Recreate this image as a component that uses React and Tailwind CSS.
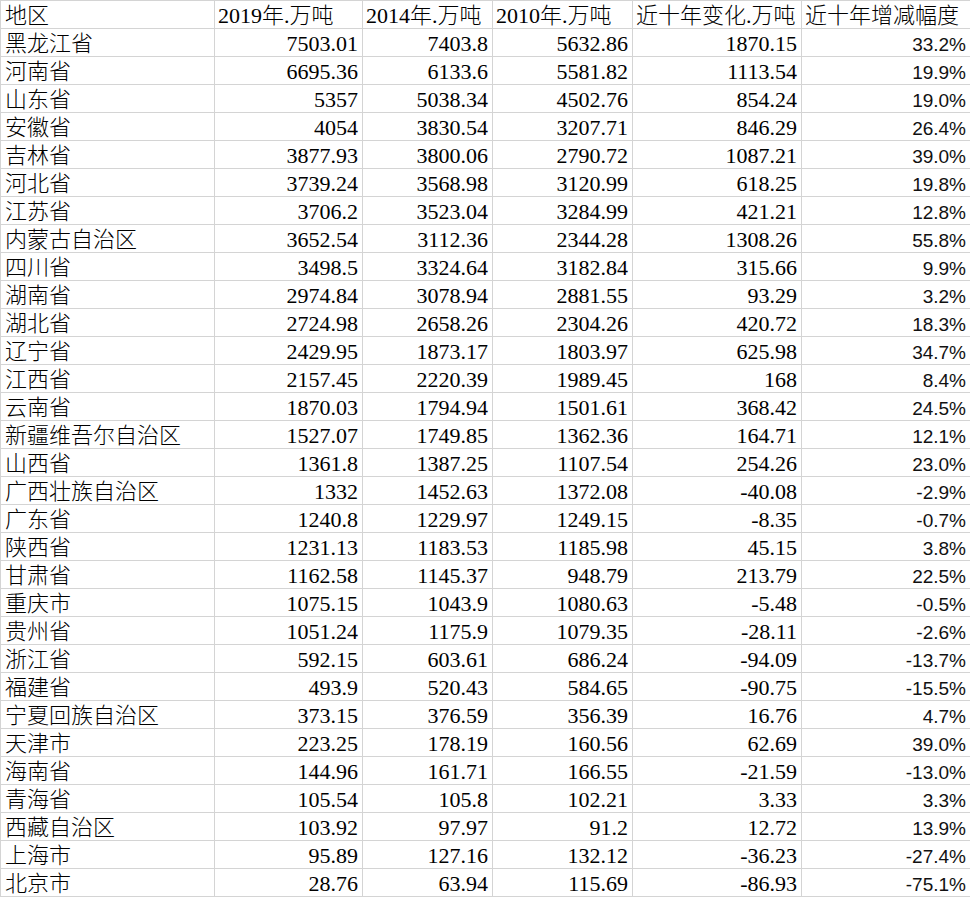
import { useState } from 'react';

const header = ['地区', '2019年.万吨', '2014年.万吨', '2010年.万吨', '近十年变化.万吨', '近十年增减幅度'];

const rows = [
  ['黑龙江省', '7503.01', '7403.8', '5632.86', '1870.15', '33.2%'],
  ['河南省', '6695.36', '6133.6', '5581.82', '1113.54', '19.9%'],
  ['山东省', '5357', '5038.34', '4502.76', '854.24', '19.0%'],
  ['安徽省', '4054', '3830.54', '3207.71', '846.29', '26.4%'],
  ['吉林省', '3877.93', '3800.06', '2790.72', '1087.21', '39.0%'],
  ['河北省', '3739.24', '3568.98', '3120.99', '618.25', '19.8%'],
  ['江苏省', '3706.2', '3523.04', '3284.99', '421.21', '12.8%'],
  ['内蒙古自治区', '3652.54', '3112.36', '2344.28', '1308.26', '55.8%'],
  ['四川省', '3498.5', '3324.64', '3182.84', '315.66', '9.9%'],
  ['湖南省', '2974.84', '3078.94', '2881.55', '93.29', '3.2%'],
  ['湖北省', '2724.98', '2658.26', '2304.26', '420.72', '18.3%'],
  ['辽宁省', '2429.95', '1873.17', '1803.97', '625.98', '34.7%'],
  ['江西省', '2157.45', '2220.39', '1989.45', '168', '8.4%'],
  ['云南省', '1870.03', '1794.94', '1501.61', '368.42', '24.5%'],
  ['新疆维吾尔自治区', '1527.07', '1749.85', '1362.36', '164.71', '12.1%'],
  ['山西省', '1361.8', '1387.25', '1107.54', '254.26', '23.0%'],
  ['广西壮族自治区', '1332', '1452.63', '1372.08', '-40.08', '-2.9%'],
  ['广东省', '1240.8', '1229.97', '1249.15', '-8.35', '-0.7%'],
  ['陕西省', '1231.13', '1183.53', '1185.98', '45.15', '3.8%'],
  ['甘肃省', '1162.58', '1145.37', '948.79', '213.79', '22.5%'],
  ['重庆市', '1075.15', '1043.9', '1080.63', '-5.48', '-0.5%'],
  ['贵州省', '1051.24', '1175.9', '1079.35', '-28.11', '-2.6%'],
  ['浙江省', '592.15', '603.61', '686.24', '-94.09', '-13.7%'],
  ['福建省', '493.9', '520.43', '584.65', '-90.75', '-15.5%'],
  ['宁夏回族自治区', '373.15', '376.59', '356.39', '16.76', '4.7%'],
  ['天津市', '223.25', '178.19', '160.56', '62.69', '39.0%'],
  ['海南省', '144.96', '161.71', '166.55', '-21.59', '-13.0%'],
  ['青海省', '105.54', '105.8', '102.21', '3.33', '3.3%'],
  ['西藏自治区', '103.92', '97.97', '91.2', '12.72', '13.9%'],
  ['上海市', '95.89', '127.16', '132.12', '-36.23', '-27.4%'],
  ['北京市', '28.76', '63.94', '115.69', '-86.93', '-75.1%'],
];

// widths measured off the gridlines (each includes its 1px right line)
const colWidths = ['w-[214px]', 'w-[148px]', 'w-[130px]', 'w-[140px]', 'w-[169px]', 'w-[168px]'];

const serif = "font-['Liberation_Serif','Noto_Sans_CJK_SC',serif] font-light text-[22px] leading-[24px] pt-[3px]";
const sans = "font-['Liberation_Sans',Arial,sans-serif] text-[19px] leading-[23px] pt-[4px] text-[#111]";

function Cell({ col, isHeader, children }) {
  const last = col === 5;
  const pct = last && !isHeader;
  return (
    <div
      className={[
        colWidths[col],
        'h-[27px] shrink-0 overflow-hidden whitespace-nowrap',
        last ? '' : 'border-r border-[#d4d4d4]',
        pct ? sans : serif,
        col === 0 ? 'pl-[4px]' : 'pl-[3px]',
        isHeader || col === 0 ? 'text-left' : 'text-right pr-[4px]',
      ].join(' ')}
    >
      {children}
    </div>
  );
}

function Row({ cells, isHeader }) {
  return (
    <div className="flex h-[28px] border-b border-[#d4d4d4]">
      {cells.map((c, i) => (
        <Cell key={i} col={i} isHeader={isHeader}>
          {c}
        </Cell>
      ))}
    </div>
  );
}

export default function App() {
  const [data] = useState(rows);

  return (
    <div className="w-[970px] overflow-hidden bg-white text-black">
      <div className="border-l border-t border-[#d4d4d4]">
        <Row cells={header} isHeader />
        {data.map((r) => (
          <Row key={r[0]} cells={r} />
        ))}
      </div>
    </div>
  );
}
